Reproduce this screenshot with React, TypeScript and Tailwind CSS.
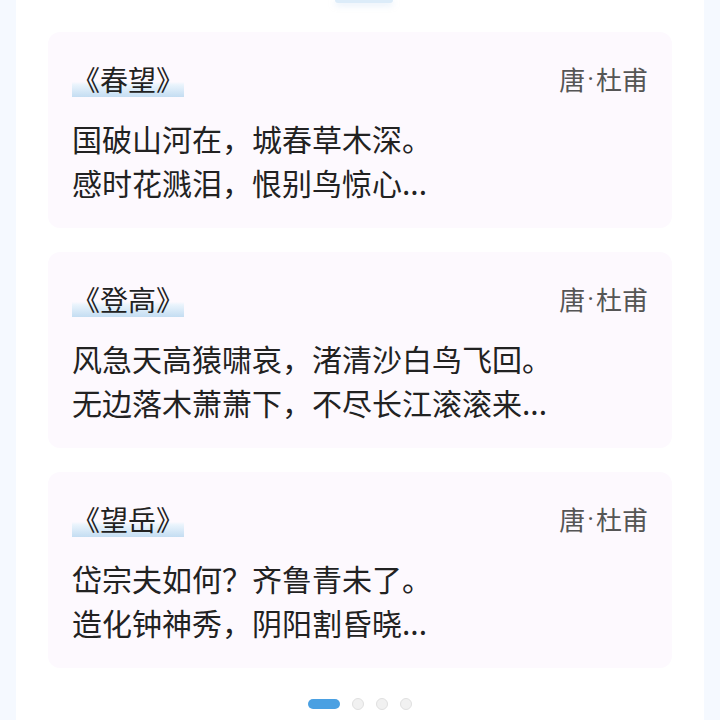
import React from "react";

const poems = [
  { title: "《春望》", lines: ["国破山河在，城春草木深。", "感时花溅泪，恨别鸟惊心..."] },
  { title: "《登高》", lines: ["风急天高猿啸哀，渚清沙白鸟飞回。", "无边落木萧萧下，不尽长江滚滚来..."] },
  { title: "《望岳》", lines: ["岱宗夫如何？齐鲁青未了。", "造化钟神秀，阴阳割昏晓..."] },
];

export default function App() {
  return (
    <div
      className="w-[720px] h-[720px] overflow-hidden bg-[#f5f9ff] px-4"
      style={{ fontFamily: '"Noto Sans CJK SC", "Noto Sans", sans-serif' }}
    >
      <div className="h-full bg-white flex flex-col px-8">
        <div className="ml-[287px] h-[3px] w-[58px] rounded-b-md bg-[#dcecf9] shadow-[0_2px_6px_rgba(180,210,240,0.5)]" />
        <div className="flex flex-col gap-6 pt-[29px]">
          {poems.map((p) => (
            <div key={p.title} className="h-[196px] overflow-hidden rounded-xl bg-[#fdf9fe] px-6 pt-[29px]">
              <div className="flex h-[36px] items-center justify-between">
                <span className="inline-block h-[36px] text-[28px] leading-[36px] text-[#222] bg-[linear-gradient(to_bottom,transparent_58%,#eaf4fc_66%,#c4ddf2_100%)]">
                  {p.title}
                </span>
                <span className="flex h-[36px] items-center text-[26px] leading-[36px] text-[#555]">
                  <span>唐</span>
                  <span className="font-['Roboto'] mx-[2px] leading-none">·</span>
                  <span>杜甫</span>
                </span>
              </div>
              <div className="mt-[19px] text-[30px] leading-[44px] text-[#222]">
                {p.lines.map((l) => (
                  <div key={l} className="h-[44px]">{l}</div>
                ))}
              </div>
            </div>
          ))}
        </div>
        <div className="mt-[30px] flex items-center justify-center gap-3">
          <div className="h-[10px] w-[32px] rounded-full bg-[#4aa0e2]" />
          <div className="h-[12px] w-[12px] rounded-full bg-[#f1f1f1] border border-[#e0e0e0]" />
          <div className="h-[12px] w-[12px] rounded-full bg-[#f1f1f1] border border-[#e0e0e0]" />
          <div className="h-[12px] w-[12px] rounded-full bg-[#f1f1f1] border border-[#e0e0e0]" />
        </div>
      </div>
    </div>
  );
}
